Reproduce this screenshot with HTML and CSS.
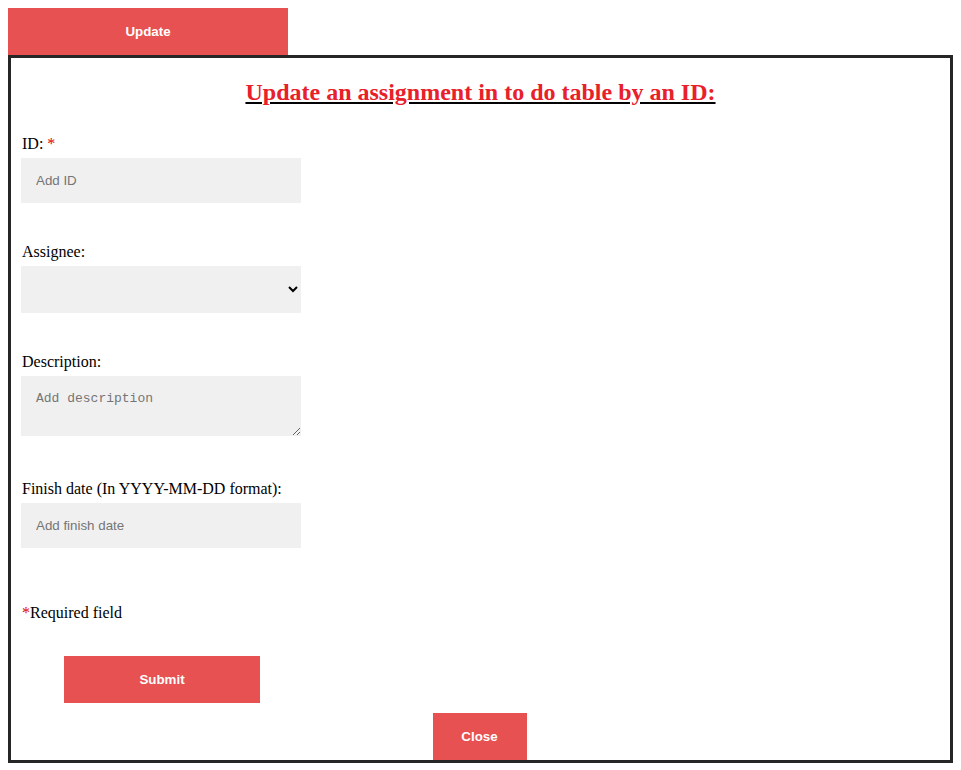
FILE: index.html
```html
<!DOCTYPE html>
<html>
<head>
<meta charset="utf-8">
<link rel="stylesheet" href="styles.css">
</head>
<body>
<div class="tabs"><button class="tab-btn">Update</button></div>
<div class="panel">
  <h2 class="title"><span>Update an assignment in to do table by an ID:</span></h2>
  <form class="form">
    <div class="field f-id">
      <label class="lbl">ID: <span class="req">*</span></label>
      <input class="ctl" type="text" placeholder="Add ID">
    </div>
    <div class="field f-assignee">
      <label class="lbl">Assignee:</label>
      <select class="ctl sel"><option></option></select>
    </div>
    <div class="field f-desc">
      <label class="lbl">Description:</label>
      <textarea class="ctl area" placeholder="Add description"></textarea>
    </div>
    <div class="field f-date">
      <label class="lbl">Finish date (In YYYY-MM-DD format):</label>
      <input class="ctl" type="text" placeholder="Add finish date">
    </div>
    <p class="note"><span class="req">*</span>Required field</p>
    <div class="submit-row"><button type="button" class="btn submit">Submit</button></div>
  </form>
  <div class="close-row"><button type="button" class="btn close">Close</button></div>
</div>
</body>
</html>
```
FILE: styles.css
```css
html, body { background: #fff; }
body {
  margin: 8px;
  font-family: "Liberation Serif", "Times New Roman", serif;
  font-size: 16px;
  color: #000;
}
.tabs { display: flex; }
.tab-btn {
  width: 280px;
  height: 47px;
  border: none;
  background: #e85151;
  color: #fff;
  font-family: "Liberation Sans", Arial, sans-serif;
  font-size: 13.333px;
  font-weight: bold;
  padding: 0;
}
.panel {
  border: 3px solid #262626;
  padding: 0 0 0 10px;
  height: 702px;
  box-sizing: content-box;
  display: flex;
  flex-direction: column;
}
.title {
  margin: 20px 0 0 0;
  text-align: center;
  font-size: 24px;
  font-weight: bold;
  line-height: 28px;
  padding-right: 10px;
}
.title span {
  color: #e8202a;
  text-decoration: underline;
  text-decoration-color: #000;
}
.form { margin: 0; display: flex; flex-direction: column; align-items: flex-start; }
.field { display: flex; flex-direction: column; align-items: flex-start; }
.lbl { display: block; line-height: 18px; padding-left: 1px; }
.req { color: #e00000; }
.ctl {
  box-sizing: border-box;
  width: 280px;
  border: none;
  background: #f0f0f0;
  margin-top: 5px;
  padding: 15px;
  font-family: "Liberation Sans", Arial, sans-serif;
  font-size: 13.333px;
  outline: none;
}
.ctl::placeholder { color: #757575; }
input.ctl { height: 45px; }
.sel { height: 47px; padding: 0 8px; color: #000; }
.area {
  height: 60px;
  font-family: "Liberation Mono", "DejaVu Sans Mono", monospace;
  font-size: 13px;
  display: block;
}
.f-id { margin-top: 29px; }
.f-assignee { margin-top: 40px; }
.f-desc { margin-top: 40px; }
.f-date { margin-top: 44px; }
.note { margin: 56px 0 0 1px; line-height: 18px; }
.submit-row { margin-top: 34px; padding-left: 43px; }
.btn {
  border: none;
  background: #e85151;
  color: #fff;
  font-family: "Liberation Sans", Arial, sans-serif;
  font-size: 13.333px;
  font-weight: bold;
  height: 47px;
  padding: 0;
}
.submit { width: 196px; }
.close-row { margin-top: 10px; display: flex; justify-content: center; padding-right: 12px; }
.close { width: 94px; }
```
